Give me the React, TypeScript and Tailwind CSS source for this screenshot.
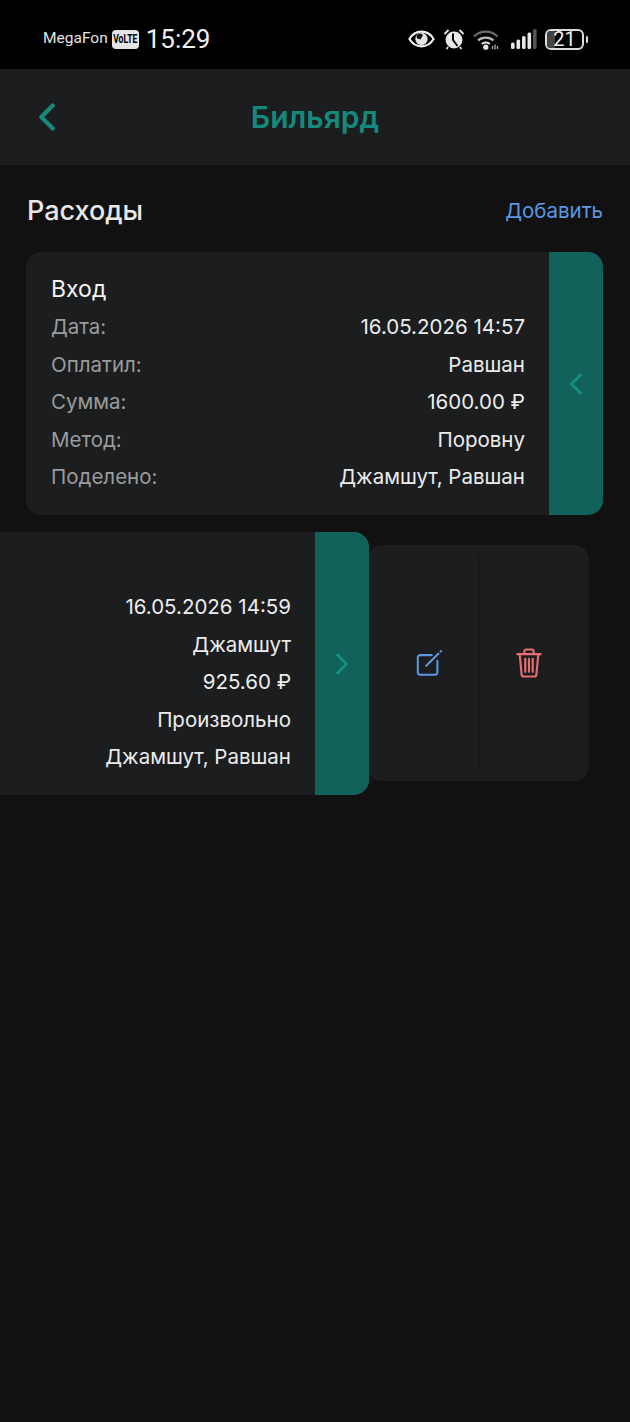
import { ChevronLeft, ChevronRight } from "lucide-react";

const font = { fontFamily: "Inter, 'Noto Sans', sans-serif" };

function EyeIcon() {
  return (
    <svg width="27" height="18" viewBox="0 0 28 18" fill="none">
      <path d="M1.5 9C4.5 3.8 8.8 1.4 14 1.4S23.5 3.8 26.5 9C23.5 14.2 19.2 16.6 14 16.6S4.5 14.2 1.5 9Z" stroke="#f0f0f0" strokeWidth="2.2" />
      <circle cx="14" cy="9" r="6.4" fill="#e4e4e4" />
      <path d="M9.5 8.5A3.4 3.4 0 0 1 15.5 5.2L13 9.5Z" fill="#111" />
    </svg>
  );
}

function AlarmIcon() {
  return (
    <svg width="22" height="22" viewBox="0 0 22 22" fill="none">
      <circle cx="11" cy="12" r="8.4" fill="#e8e8e8" />
      <path d="M10 5.5V12L14.5 18" stroke="#000" strokeWidth="2" />
      <path d="M1.5 6L5.5 2M20.5 6L16.5 2M5 19L3.5 21M17 19L18.5 21" stroke="#e8e8e8" strokeWidth="1.8" />
    </svg>
  );
}

function WifiIcon() {
  return (
    <svg width="27" height="21" viewBox="0 0 27 21" fill="none">
      <path d="M1 7.5C7.5 1 18 1 24.5 7.5" stroke="#6a6a6a" strokeWidth="2.4" />
      <path d="M5 11.5C9 7.6 16.5 7.6 20.5 11.5" stroke="#b8b8b8" strokeWidth="2.4" />
      <path d="M8.8 15C11 13 14.6 13 16.8 15" stroke="#e8e8e8" strokeWidth="2" />
      <circle cx="12.8" cy="18.2" r="2.6" fill="#e8e8e8" />
      <path d="M19.5 17V20M22 15.5V20.5M24.5 17V20" stroke="#b0b0b0" strokeWidth="1.3" />
    </svg>
  );
}

function SignalIcon() {
  return (
    <svg width="26" height="20" viewBox="0 0 26 20" fill="#e8e8e8">
      <rect x="0" y="13.5" width="3.6" height="6.5" rx="1.5" />
      <rect x="5.5" y="10.5" width="3.6" height="9.5" rx="1.5" />
      <rect x="11" y="7" width="3.6" height="13" rx="1.5" />
      <rect x="16.5" y="3.5" width="3.6" height="16.5" rx="1.5" />
      <rect x="22" y="0" width="3.6" height="20" rx="1.5" fill="#555" />
    </svg>
  );
}

function Battery() {
  return (
    <div className="flex items-center gap-[2px]">
      <div className="relative h-[21px] w-[39px] rounded-[6px] border-2 border-[#dcdcdc]">
        <div className="absolute inset-y-0 left-0 w-[23%] rounded-l-[4px] bg-[#444]" />
        <div className="relative text-center text-[20px] leading-[17px] text-[#f0f0f0]" style={{ fontFamily: "Roboto, sans-serif" }}>
          21
        </div>
      </div>
      <div className="h-[7px] w-[2px] rounded-full bg-[#dcdcdc]" />
    </div>
  );
}

function StatusBar() {
  return (
    <div className="flex h-[69px] items-center justify-between bg-black pl-[43px] pr-[42px] pt-[9px]" style={{ fontFamily: "Roboto, sans-serif" }}>
      <div className="flex items-center">
        <span className="text-[15.5px] text-[#e4e4e4]">MegaFon</span>
        <span className="ml-[4px] flex h-[19px] w-[27px] items-center justify-center rounded-[4px] bg-[#e4e4e4] text-[13px] font-bold text-black">
          <span className="scale-x-[0.66] whitespace-nowrap">VoLTE</span>
        </span>
        <span className="ml-[7px] text-[26px] leading-none text-[#f0f0f0]">15:29</span>
      </div>
      <div className="flex items-center">
        <EyeIcon />
        <div className="ml-[8px]">
          <AlarmIcon />
        </div>
        <div className="ml-[8px]">
          <WifiIcon />
        </div>
        <div className="ml-[11px]">
          <SignalIcon />
        </div>
        <div className="ml-[8px]">
          <Battery />
        </div>
      </div>
    </div>
  );
}

function Row({ label, value }: { label: string; value: string }) {
  return (
    <div className="flex h-[37.5px] items-center justify-between whitespace-nowrap text-[20.5px]">
      <span className="text-[#9a9b9d]">{label}</span>
      <span className="text-[#ececec]">{value}</span>
    </div>
  );
}

function EditIcon() {
  return (
    <svg width="28" height="29" viewBox="0 0 30 30" fill="none" stroke="#5b97e3" strokeWidth="2.2" strokeLinecap="round" strokeLinejoin="round">
      <path d="M18 6H5.5A2.5 2.5 0 0 0 3 8.5V24.5A2.5 2.5 0 0 0 5.5 27H21.5A2.5 2.5 0 0 0 24 24.5V12" />
      <path d="M12 17.5L25 4.5" />
      <path d="M27.4 2.2L28 1.6" />
    </svg>
  );
}

function TrashIcon() {
  return (
    <svg width="26" height="30" viewBox="0 0 28 32" fill="none" stroke="#e56f70" strokeWidth="2.3" strokeLinecap="round" strokeLinejoin="round">
      <path d="M1.5 6.5H26.5" />
      <path d="M9 6V3.5A2 2 0 0 1 11 1.5H17A2 2 0 0 1 19 3.5V6" />
      <path d="M4 7L6 28A2.5 2.5 0 0 0 8.5 30.5H19.5A2.5 2.5 0 0 0 22 28L24 7" />
      <path d="M10 11.5V25.5M14 11.5V25.5M18 11.5V25.5" />
    </svg>
  );
}

const first = [
  ["Дата:", "16.05.2026 14:57"],
  ["Оплатил:", "Равшан"],
  ["Сумма:", "1600.00 ₽"],
  ["Метод:", "Поровну"],
  ["Поделено:", "Джамшут, Равшан"],
];

const second = ["16.05.2026 14:59", "Джамшут", "925.60 ₽", "Произвольно", "Джамшут, Равшан"];

export default function App() {
  return (
    <div className="h-[1422px] w-[630px] overflow-hidden bg-[#111112]" style={font}>
      <StatusBar />
      <header className="relative flex h-[96px] items-center justify-center bg-[#1b1d1f]">
        <ChevronLeft className="absolute left-[24px] top-[25px] h-[46px] w-[46px] text-[#16897d]" strokeWidth={2.2} />
        <h1 className="text-[30px] font-semibold text-[#16897d]">Бильярд</h1>
      </header>
      <main className="pt-[27px]">
        <div className="flex items-center justify-between px-[27px]">
          <h2 className="text-[27px] font-medium leading-[38px] text-[#e8e8e8]">Расходы</h2>
          <button className="text-[20.5px] leading-[32px] text-[#5b97e3]">Добавить</button>
        </div>

        <div className="ml-[26px] mt-[22px] flex h-[263px] w-[577px] overflow-hidden rounded-[15px] bg-[#1b1d1f]">
          <div className="flex-1 pl-[25px] pr-[24px] pt-[18px]">
            <div className="text-[23px] leading-[39px] text-[#f4f4f4]">Вход</div>
            {first.map(([label, value]) => (
              <Row key={label} label={label} value={value} />
            ))}
          </div>
          <div className="flex w-[54px] items-center justify-center bg-[#10625a]">
            <ChevronLeft className="h-[36px] w-[36px] text-[#14917f]" strokeWidth={1.8} />
          </div>
        </div>

        <div className="relative mt-[17px] h-[263px]">
          {/* actions sit under the swiped card */}
          <div className="absolute left-[367px] top-[13px] flex h-[236px] w-[222px] rounded-[15px] bg-[#1b1d1f]">
            <div className="flex w-[111px] items-center justify-center pl-[12px]">
              <EditIcon />
            </div>
            <div className="my-[10px] w-px bg-[#111112]" />
            <div className="flex flex-1 items-center justify-center pr-[10px]">
              <TrashIcon />
            </div>
          </div>
          <div className="absolute left-0 top-0 flex h-[263px] w-[369px] overflow-hidden rounded-r-[15px] bg-[#1b1d1f]">
            <div className="flex-1 pr-[24px] pt-[57px]">
              {second.map((value) => (
                <div key={value} className="flex h-[37.5px] items-center justify-end whitespace-nowrap text-[20.5px] text-[#ececec]">
                  {value}
                </div>
              ))}
            </div>
            <div className="flex w-[54px] items-center justify-center bg-[#10625a]">
              <ChevronRight className="h-[36px] w-[36px] text-[#14917f]" strokeWidth={1.8} />
            </div>
          </div>
        </div>
      </main>
    </div>
  );
}
